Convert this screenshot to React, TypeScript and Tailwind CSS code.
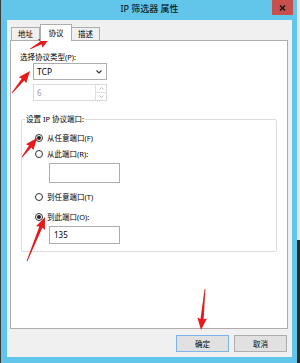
import React from 'react';

const font = "font-['Noto_Sans','Noto_Sans_CJK_SC',sans-serif]";

type Pt = [number, number];

// tapered red annotation arrow, tail -> tip
const arrowPoints = (from: Pt, to: Pt) => {
  const [x1, y1] = from;
  const [x2, y2] = to;
  const len = Math.hypot(x2 - x1, y2 - y1);
  const dx = (x2 - x1) / len;
  const dy = (y2 - y1) / len;
  const nx = -dy;
  const ny = dx;
  const head = Math.min(11, len * 0.45);
  const at = (t: number, w: number): string =>
    `${(x1 + dx * t + nx * w).toFixed(2)},${(y1 + dy * t + ny * w).toFixed(2)}`;
  return [
    at(0, 0.4),
    at(len - head, 1.6),
    at(len - head - 1, 4.8),
    at(len, 0),
    at(len - head - 1, -4.8),
    at(len - head, -1.6),
    at(0, -0.4),
  ].join(' ');
};

const arrows: [Pt, Pt][] = [
  [[30, 49], [50, 38]],
  [[12, 93], [30, 71]],
  [[22, 157], [37, 138]],
  [[27, 261], [45, 217]],
  [[205, 289], [201, 330]],
];

const Radio = ({ label, checked = false }: { label: string; checked?: boolean }) => (
  <div className="flex items-center h-[10px] ml-[13px] gap-[4px]">
    <div className="w-[8px] h-[8px] rounded-full border border-[#333] bg-white flex items-center justify-center">
      {checked && <div className="w-[4px] h-[4px] rounded-full bg-[#222]" />}
    </div>
    <span className="text-[7.5px] leading-[10px] text-black">{label}</span>
  </div>
);

const Tab = ({ label, active = false }: { label: string; active?: boolean }) => (
  <div
    className={
      active
        ? 'w-[32px] h-[17px] border border-b-0 border-[#adadad] bg-white -mb-px relative z-10 flex items-start justify-center pt-[3px] text-[7.5px] leading-[10px]'
        : 'w-[29px] h-[13px] border border-b-0 border-[#adadad] bg-[#f0f0f0] flex items-center justify-center text-[7.5px] leading-[10px] -mx-px first:mx-0'
    }
  >
    {label}
  </div>
);

export default function App() {
  return (
    <div className={`w-[300px] h-[363px] flex bg-[#1f1f1f] overflow-hidden relative ${font} text-black`}>
      <div className="w-px bg-[#3b3b3b]" />

      {/* window frame */}
      <div className="w-[296px] h-full bg-[#62c6ea] flex flex-col pl-[6px] pr-[5px] pb-[6px]">
        <div className="h-[20px] relative flex items-center justify-center">
          <span className="text-[9px] leading-[12px] text-black -mt-[2px]">IP 筛选器 属性</span>
          <div className="absolute right-[-1px] top-0 w-[21px] h-[15px] bg-[#c7504c] flex items-center justify-center">
            <svg width="7" height="6" viewBox="0 0 7 6">
              <path d="M1 0.5 L6 5.5 M6 0.5 L1 5.5" stroke="#1a1a1a" strokeWidth="1.6" />
            </svg>
          </div>
        </div>

        <div className="flex-1 bg-[#f0f0f0] flex flex-col">
          {/* tabs */}
          <div className="flex items-end h-[16px] mt-[4px] ml-[4px]">
            <Tab label="地址" />
            <Tab label="协议" active />
            <Tab label="描述" />
          </div>

          {/* tab panel */}
          <div className="ml-[3px] mr-[4px] h-[289px] border border-[#adadad] bg-white flex flex-col">
            <div className="mt-[11px] pl-[9px] text-[7.5px] leading-[10px]">选择协议类型(P):</div>

            <div className="ml-[22px] mt-[1px] w-[74px] h-[17px] border border-[#adadad] bg-white flex items-center justify-between pl-[3px] pr-[4px]">
              <span className="text-[8.5px] leading-[10px]">TCP</span>
              <svg width="6" height="4" viewBox="0 0 6 4">
                <path d="M0.5 0.5 L3 3 L5.5 0.5" stroke="#333" strokeWidth="1.1" fill="none" />
              </svg>
            </div>

            <div className="ml-[22px] mt-[4px] w-[74px] h-[17px] border border-[#d9d9d9] bg-white flex items-stretch">
              <span className="flex-1 pl-[3px] text-[8px] leading-[15px] text-[#a3a3a3]">6</span>
              <div className="w-[11px] border-l border-[#e0e0e0] flex flex-col">
                <div className="flex-1 flex items-center justify-center border-b border-[#e0e0e0]">
                  <svg width="5" height="3" viewBox="0 0 5 3">
                    <path d="M0.5 2.5 L2.5 0.5 L4.5 2.5" stroke="#b5b5b5" strokeWidth="0.9" fill="none" />
                  </svg>
                </div>
                <div className="flex-1 flex items-center justify-center">
                  <svg width="5" height="3" viewBox="0 0 5 3">
                    <path d="M0.5 0.5 L2.5 2.5 L4.5 0.5" stroke="#b5b5b5" strokeWidth="0.9" fill="none" />
                  </svg>
                </div>
              </div>
            </div>

            {/* group box */}
            <div className="ml-[10px] mt-[18px] w-[256px] h-[133px] border border-[#dcdcdc] rounded-[2px] relative flex flex-col">
              <span className="absolute left-[3px] -top-[6px] bg-white px-px text-[7.5px] leading-[10px]">设置 IP 协议端口:</span>
              <div className="mt-[13px]">
                <Radio label="从任意端口(F)" checked />
              </div>
              <div className="mt-[6px]">
                <Radio label="从此端口(R):" />
              </div>
              <div className="ml-[27px] mt-[4px] w-[71px] h-[20px] border border-[#adadad] bg-white" />
              <div className="mt-[9px]">
                <Radio label="到任意端口(T)" />
              </div>
              <div className="mt-[10px]">
                <Radio label="到此端口(O):" checked />
              </div>
              <div className="ml-[27px] mt-[4px] w-[71px] h-[18px] border border-[#adadad] bg-white flex items-center pl-[4px]">
                <span className="text-[8px] leading-[10px]">135</span>
              </div>
            </div>
          </div>

          {/* buttons */}
          <div className="mt-[6px] mr-[5px] flex justify-end gap-[5px]">
            <button className="w-[53px] h-[17px] border border-[#7eb4ea] bg-[#e1e1e1] text-[7.5px] leading-[10px]">确定</button>
            <button className="w-[53px] h-[17px] border border-[#adadad] bg-[#e1e1e1] text-[7.5px] leading-[10px]">取消</button>
          </div>
        </div>
      </div>

      {/* neighbouring window edge */}
      <div className="flex-1 flex flex-col">
        <div className="h-[240px] bg-[#e4e4e4]" />
        <div className="flex-1 bg-[#2a2a2a]" />
      </div>

      <svg className="absolute inset-0 pointer-events-none" width="300" height="363" viewBox="0 0 300 363">
        {arrows.map(([a, b], i) => (
          <polygon key={i} points={arrowPoints(a, b)} fill="#e8191b" />
        ))}
      </svg>
    </div>
  );
}
